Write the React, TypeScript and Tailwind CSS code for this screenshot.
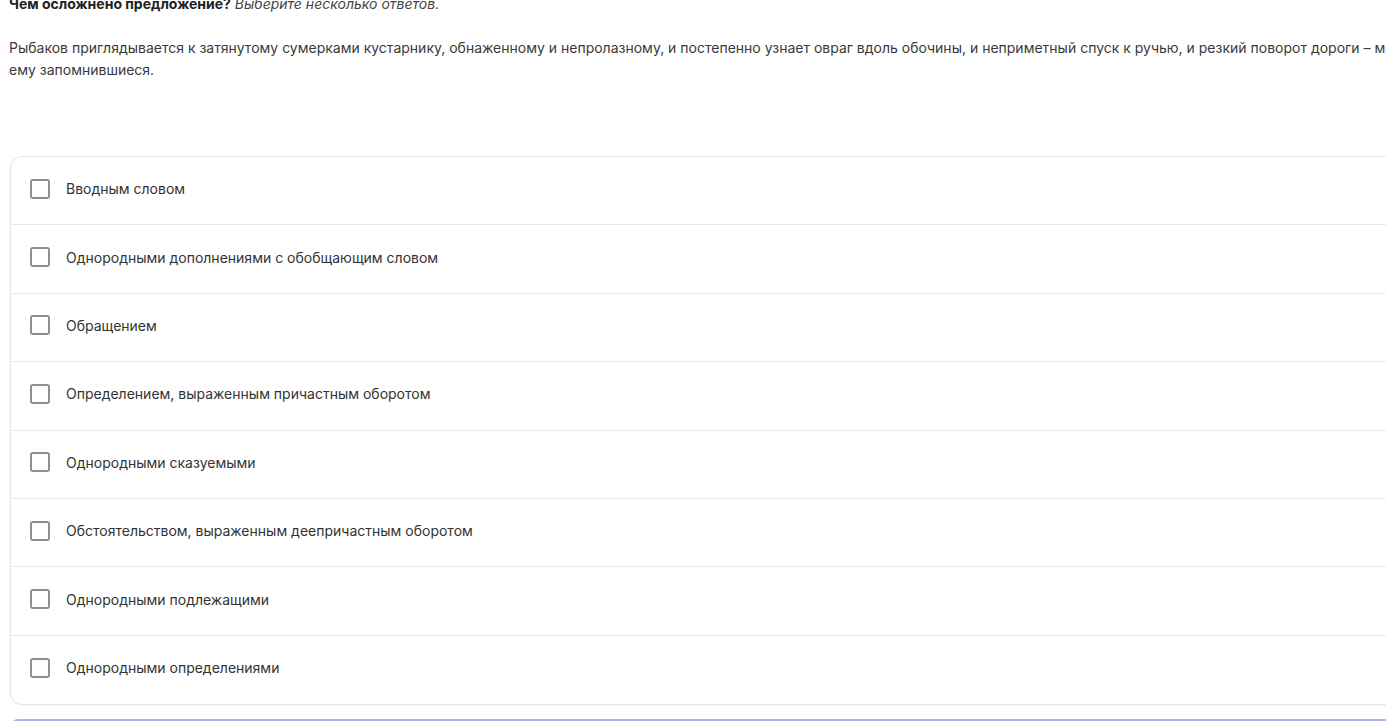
import React from "react";

const options = [
  "Вводным словом",
  "Однородными дополнениями с обобщающим словом",
  "Обращением",
  "Определением, выраженным причастным оборотом",
  "Однородными сказуемыми",
  "Обстоятельством, выраженным деепричастным оборотом",
  "Однородными подлежащими",
  "Однородными определениями",
];

export default function App() {
  return (
    <div
      className="w-[1386px] h-[721px] overflow-hidden bg-white text-[#333]"
      style={{ fontFamily: "Inter, 'Noto Sans', sans-serif" }}
    >
      <div className="w-[1440px] pl-[9px] -mt-[5px]">
        <div className="text-[14px] leading-[18px] text-[#222]">
          <span className="font-bold">Чем осложнено предложение?</span>{" "}
          <span className="italic text-[#444]">Выберите несколько ответов.</span>
        </div>
        <p className="mt-[24px] text-[14px] leading-[22px] text-[#3a3a3a]">
          Рыбаков приглядывается к затянутому сумерками кустарнику, обнаженному и непролазному, и постепенно узнает овраг вдоль обочины, и неприметный спуск к ручью, и резкий поворот дороги – места, ему запомнившиеся.
        </p>
        <div className="mt-[75px] ml-[1px] rounded-[12px] border border-[#e6e6e6] bg-white shadow-[0_1px_2px_rgba(0,0,0,0.03)]">
          {options.map((o, i) => (
            <label
              key={i}
              className={`flex items-center h-[68.4px] pl-[19px] pb-[4px] gap-[16px] ${
                i < options.length - 1 ? "border-b border-[#e8e8e8]" : ""
              }`}
            >
              <span className="w-[20px] h-[20px] rounded-[3px] border-2 border-[#8d8d94] bg-white shrink-0" />
              <span className="text-[14px] text-[#333]">{o}</span>
            </label>
          ))}
        </div>
        <div className="mt-[14px] ml-[1px] h-[20px] rounded-t-[8px] border-t-2 border-[#a9b6e6]" />
      </div>
    </div>
  );
}
